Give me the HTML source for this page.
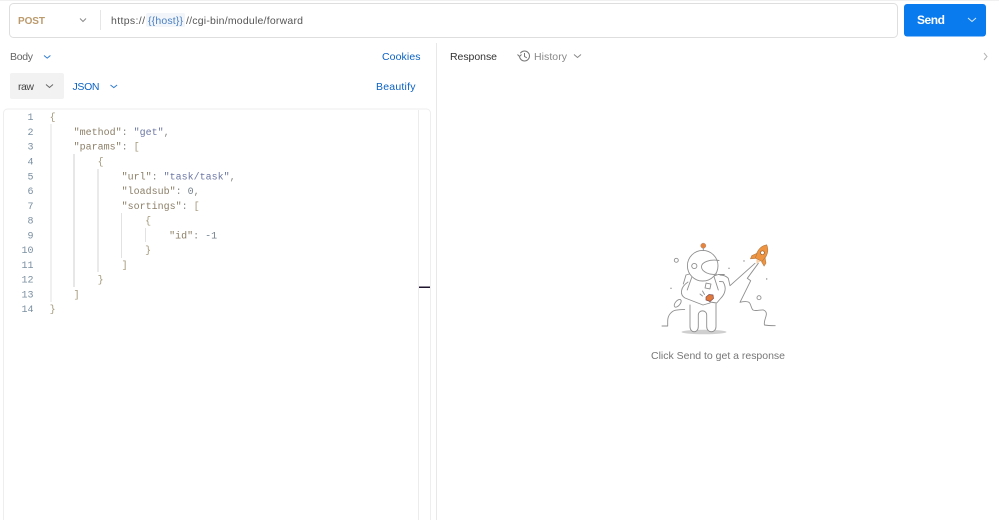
<!DOCTYPE html>
<html><head><meta charset="utf-8"><style>
html,body{margin:0;padding:0;background:#fff;width:999px;height:520px;overflow:hidden}
svg{display:block;filter:blur(.3px)}
text{font-family:"Liberation Sans",sans-serif;font-size:10.5px}
.m text,text.m{font-family:"Liberation Mono",monospace;font-size:10px}
.n text{fill:#7a8fa1;text-anchor:end}
.k{fill:#8c7f68}.s{fill:#6d78a6}.p{fill:#8a8a86}.b{fill:#a3997c}.v{fill:#74808c}
</style></head><body>
<svg width="999" height="520" viewBox="0 0 999 520" xmlns="http://www.w3.org/2000/svg">
<rect x="0" y="0" width="999" height="1" fill="#f0f0f0"/>
<rect x="9.5" y="3.5" width="888" height="34" rx="4" fill="#fff" stroke="#dedede"/>
<text x="18" y="24" font-weight="700" fill="#bb9a6c" textLength="27" style="font-size:10px">POST</text>
<path d="M80 18.5l3 3 3-3" fill="none" stroke="#8a8a8a"/>
<rect x="100" y="10" width="1" height="20" fill="#e6e6e6"/>
<text x="111" y="24" fill="#555" textLength="34">https://</text>
<rect x="146" y="13" width="39" height="14" rx="2" fill="#f2f5f9"/>
<text x="148" y="24" fill="#4a80c4" textLength="35">{{host}}</text>
<text x="186" y="24" fill="#555" textLength="117">//cgi-bin/module/forward</text>
<rect x="904" y="4" width="82" height="32.5" rx="3" fill="#0a7bef"/>
<text x="917" y="24" font-weight="700" fill="#fff" textLength="28" style="font-size:12px">Send</text>
<path d="M968 18l4 3.5 4-3.500" fill="none" stroke="#fff" stroke-opacity=".85"/>

<text x="10" y="60" fill="#666" textLength="23">Body</text>
<path d="M44 55.500l3.200 2.600 3.200-2.600" fill="none" stroke="#2f7bd0"/>
<text x="382" y="60" fill="#0b62c4" textLength="38.500">Cookies</text>
<rect x="10" y="73" width="54" height="26" rx="2" fill="#f2f2f2"/>
<text x="18" y="90" fill="#444" textLength="16">raw</text>
<path d="M46 84.500l3.500 3 3.500-3" fill="none" stroke="#666"/>
<text x="72.500" y="90" fill="#0b62c4" textLength="27">JSON</text>
<path d="M110.500 85l3.300 2.600 3.300-2.600" fill="none" stroke="#2f7bd0"/>
<text x="376" y="90" fill="#0b62c4" textLength="39.500">Beautify</text>

<rect x="436" y="43" width="1" height="477" fill="#e8e8e8"/>
<text x="450" y="60" fill="#333" textLength="47">Response</text>
<circle cx="524.500" cy="56" r="5" fill="none" stroke="#777"/>
<rect x="516" y="53" width="4.500" height="4" fill="#fff"/>
<path d="M517.500 54.500l2 2 2-2M524.500 53v3.500l2.300 1.300" fill="none" stroke="#777"/>
<text x="534" y="60" fill="#888" textLength="33">History</text>
<path d="M574 54.500l3.500 3 3.500-3" fill="none" stroke="#888"/>
<path d="M984 53l3 3.500-3 3.500" fill="none" stroke="#b5b5b5"/>

<path d="M3.500 520V113a4 4 0 0 1 4-4H426.500a4 4 0 0 1 4 4V520" fill="none" stroke="#eeeeee"/>
<rect x="418" y="110" width="1" height="410" fill="#ececec"/>
<rect x="419" y="286.500" width="11" height="1.500" fill="#20152e"/>

<g fill="#e2e2e2">
<rect x="50.500" y="124" width="1" height="178"/>
<rect x="73.500" y="154" width="1" height="133" fill="#cfcfcf"/>
<rect x="97.500" y="169" width="1" height="103" fill="#d5d5d5"/>
<rect x="121" y="213" width="1" height="45"/>
<rect x="145" y="228" width="1" height="14"/>
</g>

<g class="m n" transform="translate(0,-.8)">
<text x="33.500" y="121">1</text><text x="33.500" y="135.800">2</text><text x="33.500" y="150.500">3</text><text x="33.500" y="165.300">4</text><text x="33.500" y="180.100">5</text><text x="33.500" y="194.800">6</text><text x="33.500" y="209.600">7</text><text x="33.500" y="224.400">8</text><text x="33.500" y="239.100">9</text><text x="33.500" y="253.900">10</text><text x="33.500" y="268.700">11</text><text x="33.500" y="283.400">12</text><text x="33.500" y="298.200">13</text><text x="33.500" y="313">14</text>
</g>
<g class="m" xml:space="preserve" transform="translate(-.4,-.8)">
<text x="50" y="121" class="b">{</text>
<text x="74" y="135.800"><tspan class="k">"method"</tspan><tspan class="p">: </tspan><tspan class="s">"get"</tspan><tspan class="p">,</tspan></text>
<text x="74" y="150.500"><tspan class="k">"params"</tspan><tspan class="p">: </tspan><tspan class="b">[</tspan></text>
<text x="98" y="165.300" class="b">{</text>
<text x="122" y="180.100"><tspan class="k">"url"</tspan><tspan class="p">: </tspan><tspan class="s">"task/task"</tspan><tspan class="p">,</tspan></text>
<text x="122" y="194.800"><tspan class="k">"loadsub"</tspan><tspan class="p">: </tspan><tspan class="v">0</tspan><tspan class="p">,</tspan></text>
<text x="122" y="209.600"><tspan class="k">"sortings"</tspan><tspan class="p">: </tspan><tspan class="b">[</tspan></text>
<text x="145.500" y="224.400" class="b">{</text>
<text x="169.500" y="239.100"><tspan class="k">"id"</tspan><tspan class="p">: </tspan><tspan class="v">-1</tspan></text>
<text x="145.500" y="253.900" class="b">}</text>
<text x="122" y="268.700" class="b">]</text>
<text x="98" y="283.400" class="b">}</text>
<text x="74" y="298.200" class="b">]</text>
<text x="50" y="313" class="b">}</text>
</g>

<!-- astronaut -->
<ellipse cx="704" cy="332" rx="22.500" ry="2.300" fill="#cfcfcf"/>
<g fill="none" stroke="#8f8f8f" stroke-width=".9" stroke-linecap="round" stroke-linejoin="round">
<path d="M662 326h5.700v-5c0-6 4-10 8-10.800 3-.6 6-.8 9-.8"/>
<path d="M686 275l-2.700 9M686 275l5-1.500M714 276l4.300-1.500h6"/>
<path d="M691.700 277.500l-4.500 12.500M714 276.500l4.300 13.500"/>
<path d="M690 305v21.500c0 7 8.300 7 8.300 0V315c0-5.500 8.400-5.500 8.400 0v11.500c0 7 9.300 7 9.300 0V304" fill="#fff"/>
<path d="M688 282c-3 2-6 5-6.500 9-.4 3 1 5.500 3.500 7l18 7 7 -2M719.500 281.500l3.500.2c2 3 2.500 6 2 8.800-.5 3-2 5.500-4 7.500l-4.300 5-6.700-1-2-3"/>
<circle cx="702.700" cy="265.700" r="15.300" fill="#fff"/>
<path d="M719 260.500c-9-1.500-17.500 1.500-17.500 6.300 0 5 8.500 8.700 15 7.300"/>
<circle cx="694.300" cy="266" r="2.600"/>
<path d="M703.300 248v2.400"/>
<circle cx="676.300" cy="260.300" r="2"/>
<circle cx="759" cy="297.700" r="2"/>
<rect x="705.500" y="283.500" width="5" height="5" transform="rotate(12 708 286)"/>
<ellipse cx="677.700" cy="303.300" rx="2.400" ry="4.600" transform="rotate(40 677.700 303.300)"/>
<path d="M702.500 291l2 3.500M700 294l2.500 2"/>
<path d="M755 263.300L730 285.700l-1.700-7.400c-2-2-5-3.300-8.300-3.300"/>
<path d="M758.300 263.300l-11 15 3.400 2.400-10.700 21.600c3.500-.8 7-1 9 0 2 1.500 2 6 4 7.700 3 1.500 7.500-.5 10.500 0 2.500 1 3.200 3 2.700 5.300-.5 3-2.700 6.500-1.700 9.700 3 .7 7 .7 10.700.7"/>
</g>
<circle cx="703.300" cy="245.700" r="2.600" fill="#e8833a" stroke="#a09090" stroke-width=".5"/>
<g fill="#8b8b8b"><circle cx="671" cy="288.300" r=".7"/><circle cx="729" cy="268.300" r=".7"/><circle cx="744" cy="261" r=".7"/><circle cx="766.700" cy="279" r=".7"/></g>
<path d="M706 297l3-2.500 4 .5 .5 3.500-3.500 3-4-1.500z" fill="#e0793a" stroke="#7f4a50" stroke-width=".7"/>
<g transform="translate(1.500,.5) rotate(28 760 254)">
<path d="M760 243c4 3 5.500 8 4.700 13l-1 4h-7.400l-1-4c-.8-5 .7-10 4.700-13z" fill="#ef9440" stroke="#b07a45" stroke-width=".6"/>
<path d="M755.500 255l-3.500 4.500 .3 3.500 4-2.500zM764.500 255l3.500 4.500-.3 3.500-4-2.500z" fill="#ef9440" stroke="#b07a45" stroke-width=".6"/>
<circle cx="760" cy="252" r="1.900" fill="#fff" stroke="#8b5a30" stroke-width=".7"/>
<path d="M757.500 260.500l2.500 4 2.500-4z" fill="#f7cfa8"/>
</g>
<text x="651" y="359" fill="#777" textLength="134">Click Send to get a response</text>
</svg>
</body></html>
